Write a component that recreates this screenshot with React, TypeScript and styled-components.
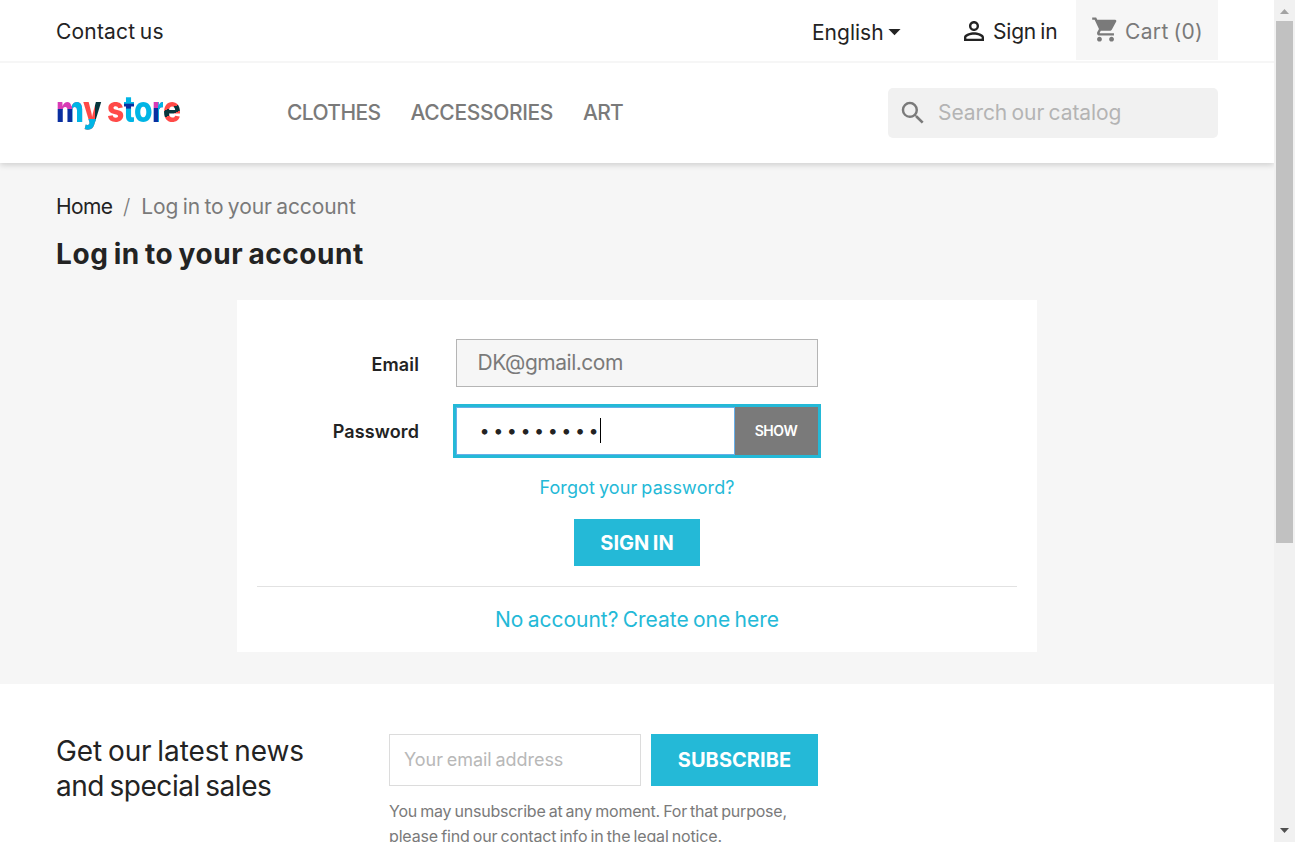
import React from 'react';
import styled, { createGlobalStyle } from 'styled-components';
import { MdShoppingCart, MdSearch, MdPersonOutline, MdArrowDropDown } from 'react-icons/md';

const GlobalStyle = createGlobalStyle`
  * { box-sizing: border-box; }
  body {
    margin: 0;
    overflow: hidden;
    font-family: Inter, "Liberation Sans", sans-serif;
    font-size: 21px;
    color: #232323;
    background: #fff;
  }
  a { color: inherit; text-decoration: none; }
`;

const Window = styled.div`
  display: flex;
  height: 842px;
  width: 1295px;
  overflow: hidden;
`;

const Page = styled.div`
  flex: 1;
  display: flex;
  flex-direction: column;
  background: #f6f6f6;
`;

const Label = styled.span<{ $size?: number; $weight?: number; $track?: number; $color?: string }>`
  font-size: ${p => p.$size ?? 21}px;
  font-weight: ${p => p.$weight ?? 370};
  letter-spacing: ${p => p.$track ?? 0}px;
  word-spacing: -0.07em;
  color: ${p => p.$color ?? 'inherit'};
  white-space: nowrap;
`;

const Header = styled.header`
  flex: none;
  background: #fff;
  box-shadow: 0 2px 6px rgba(0, 0, 0, 0.16);
  clip-path: inset(0 0 -12px 0);
  z-index: 1;
`;

const TopBar = styled.nav`
  display: flex;
  height: 63px;
  padding: 0 56px;
  border-bottom: 2px solid #f6f6f6;
  line-height: 60px;
`;

const ContactLink = styled.a`
  flex: 1;
  padding-top: 2px;
`;

const Language = styled.div`
  display: flex;
  width: 151px;
  padding-top: 3px;
  svg { width: 29px; height: 29px; margin: 14px 0 0 -4px; }
`;

const Account = styled.a`
  display: flex;
  width: 117px;
  padding-top: 2px;
  margin-right: -4px;
  svg { width: 30px; height: 30px; margin: 14px 4px 0 -4px; }
`;

const Cart = styled.div`
  display: flex;
  width: 142px;
  height: 60px;
  padding: 2px 0 0 15px;
  background: #f6f6f6;
  color: #7a7a7a;
  svg { width: 29px; height: 29px; margin: 13px 5px 0 0; }
`;

const HeaderMain = styled.div`
  display: flex;
  align-items: center;
  height: 100px;
  padding: 0 56px;
`;

const Logo = styled.a`
  display: flex;
  width: 231px;
  font-size: 30px;
  line-height: 36px;
  font-weight: 800;
  padding-bottom: 4px;
  transform: scaleY(1.2);
  transform-origin: 0 75%;
`;

const LogoLetter = styled.span<{ $width: number; $paint: string }>`
  width: ${p => p.$width}px;
  white-space: nowrap;
  color: transparent;
  background: ${p => p.$paint};
  background-clip: text;
  -webkit-background-clip: text;
`;

const Menu = styled.nav`
  display: flex;
  flex: 1;
  gap: 30px;
  padding-bottom: 2px;
  color: #7a7a7a;
`;

const SearchBox = styled.div`
  display: flex;
  align-items: center;
  width: 330px;
  height: 50px;
  padding-left: 10px;
  border-radius: 5px;
  background: #f1f1f1;
  svg { width: 30px; height: 30px; margin-right: 10px; color: #7a7a7a; }
  span { padding-bottom: 2px; }
`;

const Main = styled.main`
  flex: none;
  height: 521px;
  padding: 30px 56px 0;
`;

const Breadcrumb = styled.div`
  display: flex;
  line-height: 28px;
`;

const Slash = styled.span`
  width: 29px;
  text-align: center;
  color: #7a7a7a;
  font-weight: 300;
`;

const Title = styled.h1`
  margin: 15px 0 0;
  line-height: 36px;
  font-size: 28px;
`;

const Card = styled.section`
  width: 800px;
  height: 352px;
  margin: 28px 0 0 181px;
  padding: 39px 20px 0;
  background: #fff;
  text-align: center;
`;

const Field = styled.div`
  display: flex;
  align-items: center;
  height: 48px;
  margin-bottom: 20px;
`;

const FieldName = styled.label<{ $lift?: number }>`
  width: 162px;
  margin-right: 37px;
  padding-bottom: ${p => p.$lift ?? 0}px;
  text-align: right;
`;

const EmailInput = styled.div`
  width: 362px;
  height: 48px;
  padding-left: 20.5px;
  border: 1px solid #b5b5b5;
  background: #f6f6f6;
  color: #7a7a7a;
  text-align: left;
  line-height: 46px;
`;

const PasswordGroup = styled.div`
  display: flex;
  width: 362px;
  height: 48px;
  outline: 3px solid #24b9d7;
`;

const PasswordInput = styled.div`
  display: flex;
  align-items: center;
  flex: 1;
  padding: 0 0 2px 22.5px;
  border: 1px solid #66afe9;
`;

const Caret = styled.i`
  width: 1px;
  height: 25px;
  margin-left: -2px;
  background: #000;
`;

const ShowButton = styled.button`
  width: 83px;
  padding: 0 1px 2px 0;
  border: 0;
  background: #7a7a7a;
  color: #fff;
  font-family: inherit;
`;

const Forgot = styled.a`
  display: block;
  line-height: 24px;
  color: #24b9d7;
`;

const PrimaryButton = styled.button<{ $width: number; $height: number }>`
  width: ${p => p.$width}px;
  height: ${p => p.$height}px;
  padding: 0;
  border: 0;
  background: #24b9d7;
  color: #fff;
  font-family: inherit;
`;

const SignInRow = styled.div`
  display: flex;
  justify-content: center;
  padding: 20px 0;
  margin-top: -1px;
`;

const Register = styled.div`
  border-top: 1px solid #e2e2e2;
  color: #24b9d7;
  line-height: 65px;
`;

const Newsletter = styled.footer`
  display: flex;
  flex: 1;
  min-height: 0;
  padding: 50px 56px 0;
  background: #fff;
`;

const Headline = styled.div`
  display: flex;
  flex-direction: column;
  width: 333px;
  font-size: 28px;
  line-height: 35px;
`;

const Subscribe = styled.div`
  width: 429px;
`;

const SubscribeRow = styled.div`
  display: flex;
  gap: 10px;
  height: 52px;
  margin-bottom: 13px;
`;

const NewsInput = styled.div`
  flex: 1;
  padding-left: 14px;
  border: 1px solid #dcdcdc;
  line-height: 48px;
`;

const Legal = styled.div`
  display: flex;
  flex-direction: column;
  font-size: 16px;
  line-height: 25px;
  color: #7a7a7a;
`;

const ScrollTrack = styled.aside`
  display: flex;
  flex-direction: column;
  justify-content: space-between;
  width: 20px;
  margin-left: 1px;
  padding: 0 2px 0 1px;
  background: #f1f1f1;
  box-shadow: -1px 0 #f1f1f1;
`;

const Thumb = styled.div`
  height: 522px;
  margin-bottom: auto;
  background: #c1c1c1;
`;

const ScrollArrow = styled.svg`
  width: 17px;
  height: 21px;
`;

const BLUE = '#00b5e5';
const NAVY = '#0a2fa0';
const PINK = '#d83bb5';
const RED = '#ff4a48';
const DARK = '#07363d';

const logoLetters = [
  { ch: 'm', w: 27, paint: `linear-gradient(90deg, transparent 0 60%, ${BLUE} 60%), linear-gradient(180deg, ${PINK} 0 50%, ${NAVY} 50%)` },
  { ch: 'y', w: 24, paint: `linear-gradient(180deg, transparent 0 74%, ${BLUE} 74%), linear-gradient(90deg, ${RED} 0 52%, ${DARK} 52%)` },
  { ch: 's', w: 16.5, paint: RED },
  { ch: 't', w: 10.5, paint: `linear-gradient(180deg, ${BLUE} 0 38%, ${NAVY} 38% 51%, ${BLUE} 51%)` },
  { ch: 'o', w: 18, paint: BLUE },
  { ch: 'r', w: 11, paint: `linear-gradient(90deg, transparent 0 55%, ${BLUE} 55%), linear-gradient(180deg, ${PINK} 0 48%, ${NAVY} 48%)` },
  { ch: 'e', w: 20, paint: `linear-gradient(160deg, ${RED} 0 47%, ${DARK} 47% 60%, ${RED} 60%)` },
];

export default function App() {
  return (
    <>
      <GlobalStyle />
      <Window>
        <Page>
          <Header>
            <TopBar>
              <ContactLink><Label $track={0.18}>Contact us</Label></ContactLink>
              <Language><Label>English</Label><MdArrowDropDown /></Language>
              <Account><MdPersonOutline /><Label $track={-0.2}>Sign in</Label></Account>
              <Cart><MdShoppingCart /><Label $track={0.35}>Cart (0)</Label></Cart>
            </TopBar>
            <HeaderMain>
              <Logo>
                {logoLetters.map(l => <LogoLetter key={l.ch} $width={l.w} $paint={l.paint}>{l.ch}</LogoLetter>)}
              </Logo>
              <Menu>
                <Label $weight={500} $track={-0.6}>CLOTHES</Label>
                <Label $weight={500} $track={-0.35}>ACCESSORIES</Label>
                <Label $weight={500} $track={-0.8}>ART</Label>
              </Menu>
              <SearchBox><MdSearch /><Label $track={-0.08} $color="#b4b4b4">Search our catalog</Label></SearchBox>
            </HeaderMain>
          </Header>
          <Main>
            <Breadcrumb>
              <Label $track={-0.65}>Home</Label>
              <Slash>/</Slash>
              <Label $track={-0.08} $color="#7a7a7a">Log in to your account</Label>
            </Breadcrumb>
            <Title><Label $size={28} $weight={650} $track={0.57}>Log in to your account</Label></Title>
            <Card>
              <Field>
                <FieldName><Label $size={18} $weight={600} $track={0.15}>Email</Label></FieldName>
                <EmailInput><Label $track={-0.48}>DK@gmail.com</Label></EmailInput>
              </Field>
              <Field>
                <FieldName $lift={2}><Label $size={18} $weight={600} $track={0.12}>Password</Label></FieldName>
                <PasswordGroup>
                  <PasswordInput>
                    <Label $size={18} $track={3.5}>•••••••••</Label>
                    <Caret />
                  </PasswordInput>
                  <ShowButton><Label $size={14} $weight={600} $track={-0.45}>SHOW</Label></ShowButton>
                </PasswordGroup>
              </Field>
              <Forgot><Label $size={18} $track={0.12}>Forgot your password?</Label></Forgot>
              <SignInRow>
                <PrimaryButton $width={126} $height={47}><Label $size={20} $weight={700} $track={0.05}>SIGN IN</Label></PrimaryButton>
              </SignInRow>
              <Register><Label $track={-0.03}>No account? Create one here</Label></Register>
            </Card>
          </Main>
          <Newsletter>
            <Headline>
              <Label $size={28} $track={-0.09}>Get our latest news</Label>
              <Label $size={28} $track={-0.46}>and special sales</Label>
            </Headline>
            <Subscribe>
              <SubscribeRow>
                <NewsInput><Label $size={18} $track={-0.03} $color="#b8b8b8">Your email address</Label></NewsInput>
                <PrimaryButton $width={167} $height={52}><Label $size={20} $weight={650} $track={0.05}>SUBSCRIBE</Label></PrimaryButton>
              </SubscribeRow>
              <Legal>
                <Label $size={16} $track={-0.22}>You may unsubscribe at any moment. For that purpose,</Label>
                <Label $size={16} $track={-0.16}>please find our contact info in the legal notice.</Label>
              </Legal>
            </Subscribe>
          </Newsletter>
        </Page>
        <ScrollTrack>
          <ScrollArrow viewBox="0 0 17 21"><path d="M4 14 L8.5 9 L13 14Z" fill="#a3a3a3" /></ScrollArrow>
          <Thumb />
          <ScrollArrow viewBox="0 0 17 21"><path d="M4 7 L13 7 L8.5 12Z" fill="#505050" /></ScrollArrow>
        </ScrollTrack>
      </Window>
    </>
  );
}
